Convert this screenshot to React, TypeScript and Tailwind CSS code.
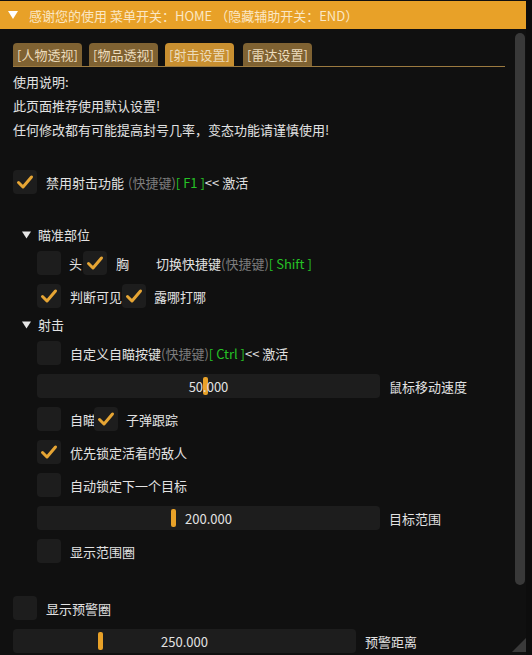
import React from "react";

// ImGui-style cheat menu window, tab "射击设置" open.

const FONT = { fontFamily: '"Noto Sans CJK SC", "Noto Sans", sans-serif' };

function Check({ checked = false }: { checked?: boolean }) {
  return (
    <span className="flex h-6 w-6 shrink-0 items-center justify-center rounded-[4px] bg-[#1d1d1d]">
      {checked && (
        <svg width="24" height="24" viewBox="0 0 24 24" aria-hidden="true">
          <path
            d="M5.5 12.5 L10 17 L18.5 7"
            fill="none"
            stroke="#e6a534"
            strokeWidth="3"
            strokeLinecap="round"
            strokeLinejoin="round"
          />
        </svg>
      )}
    </span>
  );
}

function Arrow() {
  return (
    <svg width="9" height="8" viewBox="0 0 9 8" aria-hidden="true">
      <polygon points="0,0.5 9,0.5 4.5,7.5" fill="#e6e6e6" />
    </svg>
  );
}

function TreeNode({ label }: { label: string }) {
  return (
    <div className="flex h-[15px] items-center pl-[9px]">
      <Arrow />
      <span className="ml-[7px]">{label}</span>
    </div>
  );
}

function Hotkey({ k, tail = false, gap = false }: { k: string; tail?: boolean; gap?: boolean }) {
  return (
    <>
      <span className={`text-[#7c7c7c] ${gap ? "ml-[4px]" : ""}`}>(快捷键)</span>
      <span className="text-[#26c226]">[ {k} ]</span>
      {tail && <span>&lt;&lt; 激活</span>}
    </>
  );
}

function Slider({ value, grab, label }: { value: string; grab: number; label: string }) {
  return (
    <div className="flex h-6 items-center">
      <div className="relative flex h-6 w-[343px] items-center justify-center rounded-[4px] bg-[#1d1d1d]">
        <span
          className="absolute top-[3px] h-[18px] w-[5px] rounded-[2px] bg-[#e8a128]"
          style={{ left: grab }}
        />
        <span className="relative">{value}</span>
      </div>
      <span className="ml-[9px]">{label}</span>
    </div>
  );
}

export default function App() {
  return (
    <div
      className="h-[655px] w-[532px] overflow-hidden bg-[#0d0d0d] text-[13px] leading-[15px] text-[#e2e2e2]"
      style={FONT}
    >
      <div className="relative flex h-full w-[526px] flex-col bg-[#101010]">
        {/* Title bar */}
        <div className="mt-px flex h-[28px] shrink-0 items-center bg-[#e8a128] pl-[8px] text-[#fbe7c4]">
          <svg width="10" height="8" viewBox="0 0 10 8" aria-hidden="true">
            <polygon points="0,0 10,0 5,8" fill="#ffffff" />
          </svg>
          <span className="ml-[11px]">感谢您的使用 菜单开关：HOME （隐藏辅助开关：END）</span>
        </div>

        <div className="flex flex-1 overflow-hidden">
          {/* Content */}
          <div className="flex-1 pl-[13px] pr-[10px] pt-[14px]">
            <div className="flex items-end gap-[7px] border-b border-[#9c7a40]">
              {["[人物透视]", "[物品透视]", "[射击设置]", "[雷达设置]"].map((t, i) => (
                <div
                  key={t}
                  className={`flex h-[23px] w-[69px] items-center justify-center rounded-t-[4px] text-[#ecdcbd] ${
                    i === 2 ? "bg-[#c88f30]" : "bg-[#7f6232]"
                  } ${i === 3 ? "ml-[2px]" : ""}`}
                >
                  {t}
                </div>
              ))}
            </div>

            <div className="mt-[7px] flex flex-col gap-[9px]">
              <div className="h-[15px]">使用说明:</div>
              <div className="h-[15px]">此页面推荐使用默认设置!</div>
              <div className="h-[15px]">任何修改都有可能提高封号几率，变态功能请谨慎使用!</div>
              <div className="h-[15px]" />

              <div className="flex h-6 items-center">
                <Check checked />
                <span className="ml-[9px]">禁用射击功能</span>
                <Hotkey k="F1" tail gap />
              </div>
              <div className="h-[15px]" />

              <TreeNode label="瞄准部位" />
              <div className="flex h-6 items-center pl-[24px]">
                <Check />
                <span className="ml-[8px]">头</span>
                <span className="ml-px">
                  <Check checked />
                </span>
                <span className="ml-[9px]">胸</span>
                <span className="ml-[27px]">切换快捷键</span>
                <Hotkey k="Shift" />
              </div>
              <div className="flex h-6 items-center pl-[24px]">
                <Check checked />
                <span className="ml-[9px]">判断可见</span>
                <Check checked />
                <span className="ml-[8px]">露哪打哪</span>
              </div>

              <TreeNode label="射击" />
              <div className="flex h-6 items-center pl-[24px]">
                <Check />
                <span className="ml-[9px]">自定义自瞄按键</span>
                <Hotkey k="Ctrl" tail />
              </div>
              <div className="pl-[24px]">
                <Slider value="50.000" grab={166} label="鼠标移动速度" />
              </div>
              <div className="flex h-6 items-center pl-[24px]">
                <Check />
                <span className="ml-[9px]">自瞄</span>
                <span className="-ml-[2px]">
                  <Check checked />
                </span>
                <span className="ml-[8px]">子弹跟踪</span>
              </div>
              <div className="flex h-6 items-center pl-[24px]">
                <Check checked />
                <span className="ml-[9px]">优先锁定活着的敌人</span>
              </div>
              <div className="flex h-6 items-center pl-[24px]">
                <Check />
                <span className="ml-[9px]">自动锁定下一个目标</span>
              </div>
              <div className="pl-[24px]">
                <Slider value="200.000" grab={134} label="目标范围" />
              </div>
              <div className="flex h-6 items-center pl-[24px]">
                <Check />
                <span className="ml-[9px]">显示范围圈</span>
              </div>
              <div className="h-[15px]" />

              <div className="flex h-6 items-center">
                <Check />
                <span className="ml-[9px]">显示预警圈</span>
              </div>
              <Slider value="250.000" grab={85} label="预警距离" />
            </div>
          </div>

          {/* Scrollbar */}
          <div className="w-[10px] shrink-0 pt-[4px] mr-px">
            <div className="h-[552px] w-[10px] rounded-full bg-[#393939]" />
          </div>
        </div>

        {/* Resize grip */}
        <svg
          className="absolute bottom-[3px] right-0"
          width="14"
          height="14"
          viewBox="0 0 14 14"
          aria-hidden="true"
        >
          <polygon points="14,0 14,14 0,14" fill="#3a3a3a" />
        </svg>
      </div>
    </div>
  );
}
